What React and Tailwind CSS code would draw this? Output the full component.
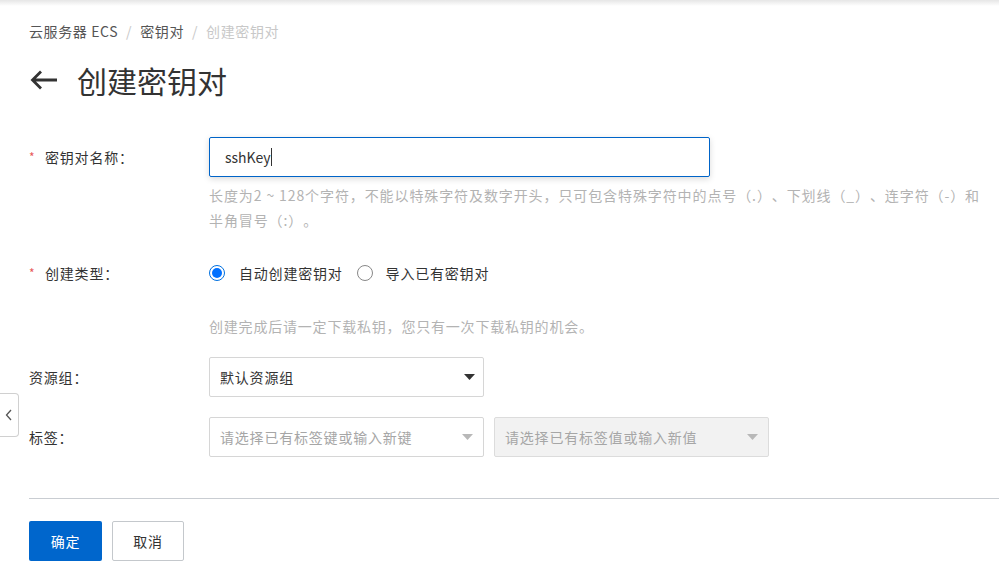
const font = { fontFamily: '"Noto Sans CJK SC", "Open Sans", sans-serif' };

function Caret({ light }) {
    return (
        <svg width="11" height="6" viewBox="0 0 11 6" className="shrink-0">
            <path d="M0 0h11L5.5 6z" fill={light ? "#b8b8b8" : "#333"} />
        </svg>
    );
}

function Label({ required, children }) {
    return (
        <div className="w-[180px] shrink-0 flex items-center h-[40px] text-[14px] tracking-[0.8px] text-[#333]">
            {required && <span className="text-[#e85a5a] text-[12px] w-[16px]">*</span>}
            <span>{children}</span>
        </div>
    );
}

export default function App() {
    return (
        <div className="relative w-[999px] h-[578px] bg-white overflow-hidden [text-spacing-trim:space-all]" style={font}>
            <div className="absolute top-0 left-0 right-0 h-[6px] bg-gradient-to-b from-[#e6e6e6] to-white" />

            {/* collapse tab */}
            <div className="absolute left-0 top-[393px] w-[19px] h-[44px] border border-l-0 border-[#d0d0d0] rounded-r bg-white flex items-center justify-center">
                <svg width="8" height="12" viewBox="0 0 8 12">
                    <path d="M6 1L1.5 6 6 11" fill="none" stroke="#555" strokeWidth="1.3" />
                </svg>
            </div>

            <div className="pl-[29px] pt-[20px]">
                <div className="flex items-center text-[14px] tracking-[0.6px] h-[22px]">
                    <span className="text-[#555]">云服务器 ECS</span>
                    <span className="text-[#c8c8c8] mx-[8px]">/</span>
                    <span className="text-[#555]">密钥对</span>
                    <span className="text-[#c8c8c8] mx-[8px]">/</span>
                    <span className="text-[#c8c8c8]">创建密钥对</span>
                </div>

                <div className="flex items-center mt-[18px] h-[40px]">
                    <svg width="30" height="22" viewBox="0 0 30 22" className="mr-[18px]">
                        <path d="M28 11H4M12 2.5L3.5 11l8.5 8.5" fill="none" stroke="#333" strokeWidth="2.8" />
                    </svg>
                    <span className="text-[30px] text-[#333]">创建密钥对</span>
                </div>

                <div className="mt-[37px] flex">
                    <Label required>密钥对名称：</Label>
                    <div>
                        <div className="w-[501px] h-[40px] border border-[#0064c8] rounded-[2px] shadow-[0_2px_6px_rgba(0,0,0,0.15)] flex items-center px-[15px] text-[14px] text-[#333]">
                            sshKey<span className="w-px h-[18px] bg-[#333]" />
                        </div>
                        <div className="mt-[6px] text-[14px] tracking-[0.9px] leading-[25px] text-[#b3b3b3] w-[790px]">
                            长度为2 ~ 128个字符，不能以特殊字符及数字开头，只可包含特殊字符中的点号（.）、下划线（_）、连字符（-）和
                            <br />
                            半角冒号（:）。
                        </div>
                    </div>
                </div>

                <div className="mt-[20px] flex">
                    <Label required>创建类型：</Label>
                    <div>
                        <div className="flex items-center h-[40px] text-[14px] tracking-[0.8px] text-[#333]">
                            <span className="w-[16px] h-[16px] rounded-full border border-[#0070e0] flex items-center justify-center mr-[14px]">
                                <span className="w-[10px] h-[10px] rounded-full bg-[#0070ff]" />
                            </span>
                            <span className="mr-[14px]">自动创建密钥对</span>
                            <span className="w-[16px] h-[16px] rounded-full border border-[#888] mr-[13px]" />
                            <span>导入已有密钥对</span>
                        </div>
                        <div className="mt-[21px] text-[14px] tracking-[0.8px] text-[#b3b3b3] leading-[25px]">
                            创建完成后请一定下载私钥，您只有一次下载私钥的机会。
                        </div>
                    </div>
                </div>

                <div className="mt-[18px] flex">
                    <div className="w-[180px] shrink-0 flex items-center h-[40px] text-[14px] tracking-[0.8px] text-[#333]">资源组：</div>
                    <div className="w-[275px] h-[40px] border border-[#d6d6d6] rounded-[2px] flex items-center justify-between pl-[10px] pr-[8px] text-[14px] tracking-[0.8px] text-[#333]">
                        默认资源组
                        <Caret />
                    </div>
                </div>

                <div className="mt-[20px] flex">
                    <div className="w-[180px] shrink-0 flex items-center h-[40px] text-[14px] tracking-[0.8px] text-[#333]">标签：</div>
                    <div className="w-[275px] h-[40px] border border-[#d6d6d6] rounded-[2px] flex items-center justify-between pl-[10px] pr-[10px] text-[14px] tracking-[0.8px] text-[#a6a6a6]">
                        请选择已有标签键或输入新键
                        <Caret light />
                    </div>
                    <div className="ml-[10px] w-[275px] h-[40px] border border-[#dcdcdc] bg-[#f2f2f2] rounded-[2px] flex items-center justify-between pl-[10px] pr-[10px] text-[14px] tracking-[0.8px] text-[#a6a6a6]">
                        请选择已有标签值或输入新值
                        <Caret light />
                    </div>
                </div>

                <div className="mt-[41px] h-px bg-[#c9cdd2]" />

                <div className="mt-[22px] flex gap-[10px]">
                    <button className="w-[73px] h-[40px] bg-[#0066cc] text-white text-[14px] tracking-[0.8px] rounded-[2px]">确定</button>
                    <button className="w-[72px] h-[40px] border border-[#c4c8cc] bg-white text-[#333] text-[14px] tracking-[0.8px] rounded-[2px]">取消</button>
                </div>
            </div>
        </div>
    );
}
